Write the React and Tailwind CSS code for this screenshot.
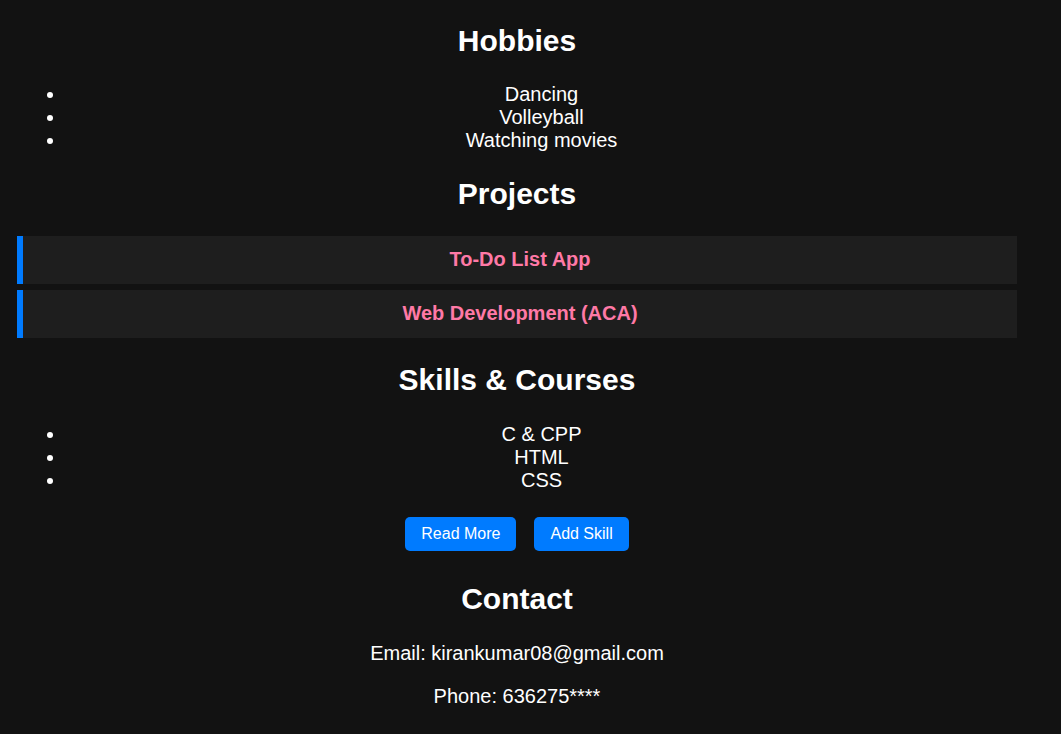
const hobbies = ["Dancing", "Volleyball", "Watching movies"];
const projects = ["To-Do List App", "Web Development (ACA)"];
const skills = ["C & CPP", "HTML", "CSS"];

function Heading({ children }) {
  return (
    <h2 className="my-[24.9px] text-center text-[30px] font-bold leading-[34.5px]">
      {children}
    </h2>
  );
}

function List({ items }) {
  return (
    <ul className="my-5 list-disc pl-[49px] text-center">
      {items.map((item) => (
        <li key={item} className="leading-[23px]">
          {item}
        </li>
      ))}
    </ul>
  );
}

function App() {
  return (
    <div
      className="min-h-[734px] overflow-hidden bg-[#121212] text-[20px] text-white"
      style={{ fontFamily: '"Liberation Sans", Arial, sans-serif' }}
    >
      <div className="ml-[17px] w-[1000px] pt-px mt-[-2px]">
        <Heading>Hobbies</Heading>
        <List items={hobbies} />

        <Heading>Projects</Heading>
        <div className="-mt-px mb-[25.9px] flex flex-col gap-[6px]">
          {projects.map((p) => (
            <div
              key={p}
              className="h-[48px] flex items-center justify-center border-l-[6px] border-[#007bff] bg-[#1e1e1e] pb-[2px] font-bold text-[#ff79a6]"
            >
              {p}
            </div>
          ))}
        </div>

        <Heading>Skills &amp; Courses</Heading>
        <List items={skills} />

        <div className="mt-[25.6px] mb-[31px] flex justify-center gap-[18px]">
          <button
            type="button"
            className="h-[34px] rounded-[5px] bg-[#007bff] px-4 text-[16px] leading-[18px] text-white"
          >
            Read More
          </button>
          <button
            type="button"
            className="h-[34px] rounded-[5px] bg-[#007bff] px-4 text-[16px] leading-[18px] text-white"
          >
            Add Skill
          </button>
        </div>

        <Heading>Contact</Heading>
        <p className="my-5 text-center leading-[23px]">
          Email: kirankumar08@gmail.com
        </p>
        <p className="my-5 text-center leading-[23px]">Phone: 636275****</p>
      </div>
    </div>
  );
}

export default App;
